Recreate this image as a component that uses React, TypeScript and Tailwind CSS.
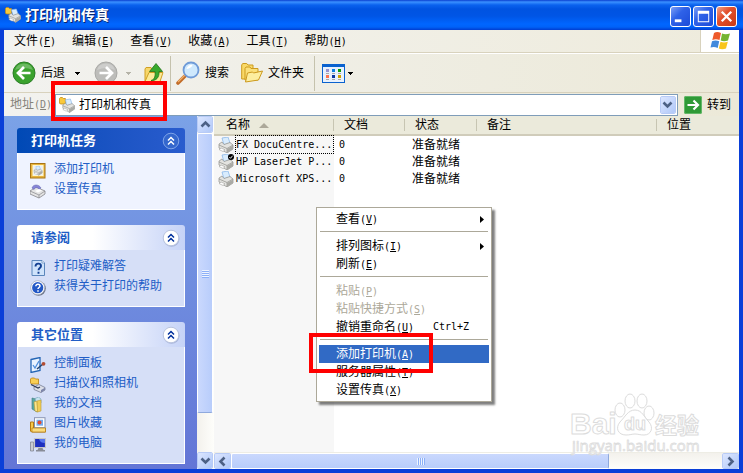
import { useState } from "react";
import type { ReactNode } from "react";
import { clsx } from "clsx";

type IconProps = { className?: string };

type TaskLink = {
  label: string;
  icon: (props: IconProps) => ReactNode;
};

type Printer = {
  name: string;
  documents: number;
  status: string;
  isDefault?: boolean;
};

type MenuEntry =
  | { kind: "separator" }
  | {
      kind: "item";
      label: string;
      hotkey: string;
      shortcut?: string;
      submenu?: boolean;
      disabled?: boolean;
      active?: boolean;
    };

const MENU_BAR = [
  { label: "文件", hotkey: "F" },
  { label: "编辑", hotkey: "E" },
  { label: "查看", hotkey: "V" },
  { label: "收藏", hotkey: "A" },
  { label: "工具", hotkey: "T" },
  { label: "帮助", hotkey: "H" },
];

const PRINTERS: Printer[] = [
  { name: "FX DocuCentre...", documents: 0, status: "准备就绪" },
  { name: "HP LaserJet P...", documents: 0, status: "准备就绪", isDefault: true },
  { name: "Microsoft XPS...", documents: 0, status: "准备就绪" },
];

const PRINTER_TASKS: TaskLink[] = [
  { label: "添加打印机", icon: AddPrinterIcon },
  { label: "设置传真", icon: FaxIcon },
];

const SEE_ALSO: TaskLink[] = [
  { label: "打印疑难解答", icon: TroubleshootIcon },
  { label: "获得关于打印的帮助", icon: HelpIcon },
];

const OTHER_PLACES: TaskLink[] = [
  { label: "控制面板", icon: ControlPanelIcon },
  { label: "扫描仪和照相机", icon: ScannerIcon },
  { label: "我的文档", icon: DocumentsIcon },
  { label: "图片收藏", icon: PicturesIcon },
  { label: "我的电脑", icon: ComputerIcon },
];

const CONTEXT_MENU: MenuEntry[] = [
  { kind: "item", label: "查看", hotkey: "V", submenu: true },
  { kind: "separator" },
  { kind: "item", label: "排列图标", hotkey: "I", submenu: true },
  { kind: "item", label: "刷新", hotkey: "E" },
  { kind: "separator" },
  { kind: "item", label: "粘贴", hotkey: "P", disabled: true },
  { kind: "item", label: "粘贴快捷方式", hotkey: "S", disabled: true },
  { kind: "item", label: "撤销重命名", hotkey: "U", shortcut: "Ctrl+Z" },
  { kind: "separator" },
  { kind: "item", label: "添加打印机", hotkey: "A", active: true },
  { kind: "item", label: "服务器属性", hotkey: "T" },
  { kind: "item", label: "设置传真", hotkey: "X" },
];

export default function App() {
  return (
    <div className="relative flex min-h-screen flex-col bg-[#0a3fd8] font-['Liberation_Sans','Noto_Sans_CJK_SC',sans-serif] text-xs leading-4 text-black">
      <TitleBar />
      <div className="mr-1 mb-1 ml-1 flex flex-1 flex-col">
        <MenuBar />
        <Toolbar />
        <AddressBar />
        <div className="flex flex-1">
          <Sidebar />
          <VerticalScrollbar />
          <main className="flex min-w-0 flex-1 flex-col bg-white">
            <PrinterList />
            <HorizontalScrollbar />
          </main>
        </div>
      </div>
      <ContextMenu />
      <Watermark />
    </div>
  );
}

function TitleBar() {
  return (
    <header className="flex h-[30px] items-center bg-[linear-gradient(to_bottom,#0a3fd0_0px,#3a90ff_2px,#0a62ee_5px,#0053e1_9px,#0055e5_16px,#0066ff_24px,#0062f8_27px,#003dd0_30px)] pr-[6px] pl-[5px]">
      <PrintersFoldersIcon className="h-4 w-4" />
      <h1 className="ml-1 flex-1 text-sm font-bold text-white [text-shadow:1px_1px_#0a246a]">
        打印机和传真
      </h1>
      <div className="flex gap-[2px] pt-[3px]">
        <CaptionButton label="最小化" className="bg-[linear-gradient(135deg,#7d9ff5,#2f62e8_40%,#1c4bd8)]">
          <path d="M4 13h7v3H4z" fill="#fff" />
        </CaptionButton>
        <CaptionButton label="最大化" className="bg-[linear-gradient(135deg,#7d9ff5,#2f62e8_40%,#1c4bd8)]">
          <path d="M4 4h12v12H4zM5 7v8h10V7z" fill="#fff" fillRule="evenodd" />
        </CaptionButton>
        <CaptionButton label="关闭" className="bg-[linear-gradient(135deg,#f0a088,#e2502c_40%,#c83a14)]">
          <path d="M5 5l10 10M15 5L5 15" stroke="#fff" strokeWidth="2.4" />
        </CaptionButton>
      </div>
    </header>
  );
}

function CaptionButton({ label, className, children }: { label: string; className: string; children: ReactNode }) {
  return (
    <button
      type="button"
      aria-label={label}
      className={clsx("h-[21px] w-[21px] rounded-[3px] border border-white", className)}
    >
      <svg viewBox="0 0 20 20" className="h-full w-full">
        {children}
      </svg>
    </button>
  );
}

function Latin({ children }: { children: ReactNode }) {
  return <span className="font-['DejaVu_Sans_Mono',monospace] text-[10px]">{children}</span>;
}

function Hotkey({ letter }: { letter: string }) {
  return (
    <Latin>
      (<u>{letter}</u>)
    </Latin>
  );
}

function MenuBar() {
  return (
    <nav className="flex h-[23px] items-stretch border-b border-[#d8d2bd] bg-linear-to-r from-[#f3f3f0] to-[#eeebdc]">
      <div className="flex flex-1 items-center gap-4 pl-[10px]">
        {MENU_BAR.map((item) => (
          <button key={item.hotkey} type="button" className="whitespace-nowrap">
            {item.label}
            <Hotkey letter={item.hotkey} />
          </button>
        ))}
      </div>
      <div className="flex w-[39px] items-center justify-center border-l border-[#d8d2bd] bg-white">
        <WindowsFlag className="h-5 w-5" />
      </div>
    </nav>
  );
}

function Toolbar() {
  return (
    <div className="flex h-10 items-center border-t border-b border-t-white border-b-[#d8d2bd] bg-linear-to-r from-[#f2f2ef] to-[#ece9d8] pl-2">
      <button type="button" className="flex items-center">
        <ArrowCircle className="h-6 w-6" />
        <span className="ml-[5px]">后退</span>
        <DropArrow className="ml-[10px] text-black" />
      </button>
      <button type="button" aria-label="前进" disabled className="ml-[14px] flex items-center">
        <ArrowCircle className="h-6 w-6" forward />
        <DropArrow className="ml-2 text-[#b5b3a8]" />
      </button>
      <button type="button" aria-label="向上" className="ml-3">
        <FolderUpIcon className="h-[22px] w-[22px]" />
      </button>
      <Divider className="ml-[5px]" />
      <button type="button" className="ml-[5px] flex items-center">
        <SearchIcon className="h-6 w-6" />
        <span className="ml-[5px]">搜索</span>
      </button>
      <button type="button" className="ml-3 flex items-center">
        <FoldersIcon className="h-[22px] w-[22px]" />
        <span className="ml-[5px]">文件夹</span>
      </button>
      <Divider className="ml-[10px]" />
      <button type="button" aria-label="查看" className="ml-[7px] flex items-center">
        <ViewsIcon className="h-[19px] w-[23px]" />
        <DropArrow className="ml-[3px] text-black" />
      </button>
    </div>
  );
}

function Divider({ className }: IconProps) {
  return <span className={clsx("h-[35px] w-px bg-[#c5c2ad]", className)} />;
}

function DropArrow({ className }: IconProps) {
  return (
    <svg viewBox="0 0 5 3" className={clsx("h-[3px] w-[5px]", className)} shapeRendering="crispEdges">
      <path d="M0 0h5L2.500 3z" fill="currentColor" />
    </svg>
  );
}

function AddressBar() {
  const [address, setAddress] = useState("打印机和传真");

  return (
    <form
      className="flex h-[23px] items-center bg-linear-to-r from-[#f2f2ef] to-[#ece9d8] pl-[6px]"
      onSubmit={(event) => event.preventDefault()}
    >
      <label htmlFor="address" className="w-[45px] text-[#85837a]">
        地址
        <Hotkey letter="D" />
      </label>
      <div className="relative flex h-[22px] flex-1 items-center border border-[#7f9db9] bg-white pl-[3px]">
        <PrintersFoldersIcon className="h-4 w-4" />
        <input
          id="address"
          value={address}
          onChange={(event) => setAddress(event.target.value)}
          className="ml-1 min-w-0 flex-1 bg-transparent outline-none"
        />
        <ScrollButton label="地址列表" direction="down" className="mr-px h-[18px] w-4" />
        <span className="pointer-events-none absolute -top-[14px] -left-[5px] z-10 h-[40px] w-[116px] border-4 border-[#ff0000]" />
      </div>
      <button type="submit" className="ml-[6px] flex items-center pr-2">
        <svg viewBox="0 0 18 18" className="h-[18px] w-[18px]">
          <rect width="18" height="18" rx="2" fill="#2f9a37" />
          <rect x=".5" y=".5" width="17" height="17" rx="1.5" fill="none" stroke="#63b868" />
          <path d="M3.500 9h10M9.500 4.500L14 9l-4.500 4.500" fill="none" stroke="#fff" strokeWidth="2.200" />
        </svg>
        <span className="ml-[5px]">转到</span>
      </button>
    </form>
  );
}

function Sidebar() {
  return (
    <aside className="flex w-[193px] shrink-0 flex-col gap-[15px] bg-linear-to-b from-[#7ba2e7] to-[#6375d6] pt-3 pr-3 pb-[5px] pl-[13px]">
      <TaskPanel title="打印机任务" links={PRINTER_TASKS} primary />
      <TaskPanel title="请参阅" links={SEE_ALSO} />
      <TaskPanel title="其它位置" links={OTHER_PLACES} />
    </aside>
  );
}

function TaskPanel({ title, links, primary }: { title: string; links: TaskLink[]; primary?: boolean }) {
  return (
    <section>
      <div
        className={clsx(
          "flex h-[25px] items-center justify-between rounded-t-[3px] pr-[5px] pl-[14px]",
          primary
            ? "bg-linear-to-r from-[#0049b5] to-[#295cce] text-white"
            : "bg-linear-to-r from-white from-45% to-[#c6d3f7] text-[#215dc6]"
        )}
      >
        <h2 className="text-[13px] font-bold">{title}</h2>
        <button type="button" aria-label={`折叠${title}`}>
          <svg viewBox="0 0 18 18" className="h-[18px] w-[18px]">
            {!primary && <circle cx="9.500" cy="9.800" r="8" fill="#8d9cc8" opacity=".6" />}
            <circle cx="9" cy="9" r="7.800" fill={primary ? "#3467cd" : "#fff"} stroke={primary ? "#7ea3e8" : "#b8c3de"} />
            <path
              d="M6 8.500l3-3 3 3M6 12.500l3-3 3 3"
              fill="none"
              stroke={primary ? "#fff" : "#00309c"}
              strokeWidth="1.500"
            />
          </svg>
        </button>
      </div>
      <ul
        className={clsx(
          "border-x border-b border-white pt-[6px] pb-[10px] pl-3",
          primary ? "bg-[#eff3ff]" : "bg-[#d6dff7]"
        )}
      >
        {links.map(({ label, icon: Icon }) => (
          <li key={label} className="h-5">
            <a href="#" className="flex items-center text-[#215dc6]">
              <Icon className="mt-1 h-4 w-4" />
              <span className="ml-2">{label}</span>
            </a>
          </li>
        ))}
      </ul>
    </section>
  );
}

const CHEVRONS = {
  up: "M3.500 9.500L7.500 5.500l4 4",
  down: "M3.500 5.500l4 4 4-4",
  left: "M9.500 3.500l-4 4 4 4",
  right: "M5.500 3.500l4 4-4 4",
};

function ScrollButton({
  label,
  direction,
  className,
}: {
  label: string;
  direction: keyof typeof CHEVRONS;
  className: string;
}) {
  return (
    <button
      type="button"
      aria-label={label}
      className={clsx(
        "flex shrink-0 items-center justify-center rounded-[2px] border border-white bg-linear-to-br from-[#dce6ff] to-[#b0c8f8] outline-1 -outline-offset-1 outline-[#b8cbf6]",
        className
      )}
    >
      <svg viewBox="0 0 15 15" className="h-[15px] w-[15px] shrink-0">
        <path d={CHEVRONS[direction]} fill="none" stroke="#4d6185" strokeWidth="2.600" />
      </svg>
    </button>
  );
}

function VerticalScrollbar() {
  return (
    <div className="flex w-[17px] shrink-0 flex-col bg-linear-to-r from-[#f3f1ec] to-[#fefefb] pr-px">
      <ScrollButton label="向上滚动" direction="up" className="h-[17px] w-4" />
      <div className="flex flex-1 flex-col pb-[39px]">
        <div className="flex flex-1 flex-col items-center justify-center gap-px rounded-[2px] border border-white border-b-[#8fa9dd] bg-linear-to-r from-[#cad8fd] to-[#b8cdfb]">
          {[0, 1, 2, 3].map((grip) => (
            <span key={grip} className="h-px w-[7px] bg-[#eef4fe] shadow-[0_1px_#8cb0f8]" />
          ))}
        </div>
      </div>
      <ScrollButton label="向下滚动" direction="down" className="h-[17px] w-4" />
    </div>
  );
}

function HorizontalScrollbar() {
  return (
    <div className="flex h-[17px] border-t border-[#eeede5] bg-linear-to-b from-[#f3f1ec] to-[#fefefb]">
      <ScrollButton label="向左滚动" direction="left" className="h-4 w-[17px]" />
      <div className="flex flex-1">
        <div className="flex w-[77%] items-center justify-center gap-px rounded-[2px] border border-white border-r-[#8fa9dd] bg-linear-to-b from-[#cad8fd] to-[#b8cdfb]">
          {[0, 1, 2, 3].map((grip) => (
            <span key={grip} className="h-[7px] w-px bg-[#eef4fe] shadow-[1px_0_#8cb0f8]" />
          ))}
        </div>
      </div>
      <ScrollButton label="向右滚动" direction="right" className="h-4 w-[17px]" />
    </div>
  );
}

function ColumnHeader({ label, sorted, last }: { label: string; sorted?: boolean; last?: boolean }) {
  return (
    <th className="h-[19px] border-b-2 border-[#d0ccba] bg-[#ebeadb] p-0 text-left font-normal">
      <div
        className={clsx(
          "flex h-3 items-center",
          sorted ? "pl-3" : "pl-[10px]",
          !last && "border-r border-[#c7c5b2] shadow-[1px_0_#fff]"
        )}
      >
        {label}
        {sorted && (
          <svg viewBox="0 0 10 5" className="ml-[9px] h-[5px] w-[10px]">
            <path d="M0 5l5-5 5 5z" fill="#aca899" />
          </svg>
        )}
      </div>
    </th>
  );
}

function PrinterList() {
  return (
    <div className="flex-1 bg-[linear-gradient(to_right,#f7f7f7_120px,#fff_120px)]">
      <table className="w-full table-fixed border-collapse">
        <colgroup>
          <col className="w-[120px]" />
          <col className="w-[71px]" />
          <col className="w-[72px]" />
          <col className="w-[180px]" />
          <col />
        </colgroup>
        <thead>
          <tr>
            <ColumnHeader label="名称" sorted />
            <ColumnHeader label="文档" />
            <ColumnHeader label="状态" />
            <ColumnHeader label="备注" />
            <ColumnHeader label="位置" last />
          </tr>
        </thead>
        <tbody>
          {PRINTERS.map((printer, i) => (
            <tr key={printer.name} className="h-[17px]">
              <td className="p-0">
                <div className="flex h-[17px] items-center pl-1">
                  <PrinterIcon className="h-4 w-4" isDefault={printer.isDefault} />
                  <span
                    className={clsx(
                      "ml-px flex-1 border whitespace-nowrap",
                      i === 0 ? "border-dotted border-black" : "border-transparent"
                    )}
                  >
                    <Latin>{printer.name}</Latin>
                  </span>
                </div>
              </td>
              <td className="p-0 pl-[5px]">
                <Latin>{printer.documents}</Latin>
              </td>
              <td className="p-0 pl-[7px]">{printer.status}</td>
              <td className="p-0" />
              <td className="p-0" />
            </tr>
          ))}
        </tbody>
      </table>
    </div>
  );
}

function ContextMenu() {
  return (
    <div
      role="menu"
      className="absolute top-[207px] left-[316px] z-20 w-44 border border-[#aca899] bg-white p-[2px] shadow-[3px_3px_2px_#00000080]"
    >
      {CONTEXT_MENU.map((entry, i) =>
        entry.kind === "separator" ? (
          <div key={i} role="separator" className="mx-px mt-[3px] mb-[5px] h-px bg-[#aca899]" />
        ) : (
          <div key={i} className="relative">
            <button
              type="button"
              role="menuitem"
              disabled={entry.disabled}
              className={clsx(
                "flex h-[18px] w-full items-center pr-[5px] pl-[17px] text-left",
                entry.disabled && "text-[#aca899]",
                entry.active && "bg-[#316ac5] text-white"
              )}
            >
              <span className="min-w-[97px]">
                {entry.label}
                <Hotkey letter={entry.hotkey} />
              </span>
              {entry.shortcut && <Latin>{entry.shortcut}</Latin>}
              {entry.submenu && (
                <svg viewBox="0 0 4 7" className="ml-auto h-[7px] w-1">
                  <path d="M0 0l4 3.500L0 7z" fill="currentColor" />
                </svg>
              )}
            </button>
            {entry.active && (
              <span className="pointer-events-none absolute -top-3 -left-[10px] z-10 h-[40px] w-[124px] border-4 border-[#ff0000]" />
            )}
          </div>
        )
      )}
    </div>
  );
}

function Watermark() {
  return (
    <svg
      viewBox="0 0 134 64"
      className="pointer-events-none absolute right-[39px] bottom-[17px] h-16 w-[134px]"
      fill="#fff"
      stroke="#dcdcdc"
      strokeLinejoin="round"
      fontFamily="Liberation Sans, Noto Sans CJK SC, sans-serif"
      fontWeight="bold"
    >
      <text x="0" y="42" fontSize="30">
        Bai
      </text>
      <ellipse cx="50" cy="18" rx="5" ry="7" />
      <ellipse cx="60" cy="9" rx="5" ry="7" />
      <ellipse cx="72" cy="9" rx="5" ry="7" />
      <ellipse cx="79" cy="21" rx="5" ry="7" />
      <path d="M65 18c7 0 9 7 14 12 5 6 2 13-5 13-4 0-6-1-9-1s-5 1-9 1c-8 0-11-7-6-13 5-5 8-12 15-12z" />
      <text x="54" y="38" fontSize="18">
        du
      </text>
      <text x="85" y="41" fontSize="22">
        经验
      </text>
      <text x="2" y="59" fontSize="15" strokeWidth=".8" fontFamily="Open Sans, sans-serif" fontWeight="normal">
        jingyan.baidu.com
      </text>
    </svg>
  );
}

function PrinterShape() {
  return (
    <>
      <path d="M4 1l6-1 2 6-6 2z" fill="#d9ecfd" stroke="#7fb0e6" strokeWidth=".7" />
      <path d="M1 7l3-2 2 2.500 6-2 3 2.500v4l-6 4L1 11z" fill="#e3e3e0" stroke="#8e8e8a" strokeWidth=".7" />
      <path d="M1 8l8 3.500 6-3.500M9 11.500V16" fill="none" stroke="#8e8e8a" strokeWidth=".7" />
      <path d="M9 12l6-3.500V12l-6 4z" fill="#a9a9a4" />
      <path d="M3 11l4 1.800-2 1.700-4-2z" fill="#fff" stroke="#8e8e8a" strokeWidth=".5" />
    </>
  );
}

function PrinterIcon({ className, isDefault }: IconProps & { isDefault?: boolean }) {
  return (
    <svg viewBox="0 0 16 16" className={className}>
      <PrinterShape />
      {isDefault && (
        <>
          <circle cx="13" cy="3" r="3" fill="#000" />
          <path d="M11.300 3l1.300 1.300 2-2.600" fill="none" stroke="#fff" strokeWidth=".9" />
        </>
      )}
    </svg>
  );
}

function PrintersFoldersIcon({ className }: IconProps) {
  return (
    <svg viewBox="0 0 16 16" className={className}>
      <path d="M.4 1.500L1.400.5h2l1 1h2V7h-5l-1-1z" fill="#f9c93c" stroke="#c08a17" strokeWidth=".8" />
      <g transform="translate(3 2) scale(.84)">
        <PrinterShape />
      </g>
    </svg>
  );
}

function AddPrinterIcon({ className }: IconProps) {
  return (
    <svg viewBox="0 0 16 16" className={className}>
      <rect x=".5" y=".5" width="14.500" height="14.500" fill="#e8b53e" stroke="#a87416" />
      <rect x="3" y="2.500" width="10" height="10" fill="#e8eef8" stroke="#fff6cf" />
      <g transform="translate(3.500 3) scale(.58)">
        <PrinterShape />
      </g>
    </svg>
  );
}

function FaxIcon({ className }: IconProps) {
  return (
    <svg viewBox="0 0 16 16" className={className}>
      <path d="M0 8l6-4 9 4v3l-6 4-9-4z" fill="#e4e4e4" stroke="#85858a" strokeWidth=".8" />
      <path d="M2 5c1-4 7-4 9 0l-2 1.500C8 4 5 4 4 6.500z" fill="#8584d8" stroke="#5e60a8" strokeWidth=".5" />
      <path d="M0 8l9 4 6-4M9 12v3" fill="none" stroke="#85858a" strokeWidth=".7" />
      <path d="M5 8l4-2 3 1.500-4 2z" fill="#fff" />
    </svg>
  );
}

function TroubleshootIcon({ className }: IconProps) {
  return (
    <svg viewBox="0 0 16 16" className={className}>
      <path d="M2 .5h10l2.500 2.500v12.500H2z" fill="#cfe3fb" stroke="#5b86bb" />
      <path d="M12 .5V3h2.500" fill="#fff" stroke="#5b86bb" strokeWidth=".7" />
      <path d="M5.500 6.500C5.500 2.500 11 3 11 6c0 2-2.500 2-2.500 4.200M8.500 11.800v2" fill="none" stroke="#123f91" strokeWidth="1.900" />
    </svg>
  );
}

function HelpIcon({ className }: IconProps) {
  return (
    <svg viewBox="0 0 16 16" className={className}>
      <circle cx="8.500" cy="8.500" r="7.300" fill="#6d7587" />
      <circle cx="7.700" cy="7.700" r="7" fill="#fff" stroke="#a0a9bd" strokeWidth=".7" />
      <circle cx="7.700" cy="7.700" r="5.600" fill="#2358c6" />
      <path d="M5.800 6.300c0-2.800 4.200-2.400 4.200-.3 0 1.500-2 1.500-2 3M8 10.200v1.600" fill="none" stroke="#fff" strokeWidth="1.500" />
    </svg>
  );
}

function ControlPanelIcon({ className }: IconProps) {
  return (
    <svg viewBox="0 0 16 16" className={className}>
      <path d="M1 2.500l9-2v13l-9 2z" fill="#e9f3ff" stroke="#2465b5" strokeWidth="1.300" />
      <path d="M3 8l2 3 4-7" fill="none" stroke="#4f8fdc" strokeWidth="1.300" />
      <path d="M7 12l6-5" stroke="#27466f" strokeWidth="1.600" />
      <circle cx="13.500" cy="6.800" r="1.900" fill="#b14c33" />
    </svg>
  );
}

function ScannerIcon({ className }: IconProps) {
  return (
    <svg viewBox="0 0 16 16" className={className}>
      <path d="M.5 2l1-1h3l1 1h3v5h-7l-1-1z" fill="#f9cf55" stroke="#ba8212" strokeWidth=".8" />
      <path d="M4 10l5-2.500 6 3v2.500l-4 2.500-7-3z" fill="#dcdfe8" stroke="#6a7086" strokeWidth=".7" />
      <path d="M1 7.500l7 3.500 2-1" fill="none" stroke="#333c53" strokeWidth="1.300" />
      <path d="M11 13l4-2.200V13l-4 2.500z" fill="#7d86aa" />
    </svg>
  );
}

function DocumentsIcon({ className }: IconProps) {
  return (
    <svg viewBox="0 0 16 16" className={className}>
      <path d="M2 1l4 1 1 13-5-3z" fill="#5aa7a1" stroke="#3d7a80" strokeWidth=".6" />
      <path d="M5 1.500L8.500 0 11 2v4H6z" fill="#c6e2ed" stroke="#6a9eb5" strokeWidth=".6" />
      <path d="M4 5l3-1 1 11-3-1z" fill="#fbe58c" stroke="#b99b32" strokeWidth=".6" />
      <path d="M7 4l4-1v11l-3.500 1z" fill="#f1cd56" stroke="#b99b32" strokeWidth=".6" />
    </svg>
  );
}

function PicturesIcon({ className }: IconProps) {
  return (
    <svg viewBox="0 0 16 16" className={className}>
      <path d="M.5 5h3v6h12v4H1.500l-1-1z" fill="#f7c94b" stroke="#b47b12" />
      <rect x="4.500" y=".7" width="10.500" height="10" fill="#fff" stroke="#8995b3" />
      <rect x="6.500" y="2.700" width="6.500" height="6" fill="#72aef0" />
      <circle cx="9.500" cy="5.500" r="2" fill="#e04a32" />
      <path d="M2 11h13.500v4H2z" fill="#fbdc7d" stroke="#b47b12" strokeWidth=".7" />
    </svg>
  );
}

function ComputerIcon({ className }: IconProps) {
  return (
    <svg viewBox="0 0 16 16" className={className}>
      <path d="M.5 5h3v9h-3z" fill="#c9cbd2" stroke="#777c89" strokeWidth=".7" />
      <path d="M4.500 1.500h11v9h-11z" fill="#1c2fc0" stroke="#c5c5c7" strokeWidth="1.200" />
      <path d="M9 2h6v4c-3 0-5-1-6-4z" fill="#5474ef" />
      <path d="M8.500 11h4l1 2h-6zM6 13h9v1.500H6z" fill="#888c97" />
    </svg>
  );
}

function WindowsFlag({ className }: IconProps) {
  return (
    <svg viewBox="0 0 20 20" className={className}>
      <path d="M4 2q3-2 7 0L9.500 9Q6 7.500 2.300 9z" fill="#ee5a2b" />
      <path d="M12 2.500q3.500 1.500 8 0L18 9.500q-4 1.500-7.300 0z" fill="#74b531" />
      <path d="M2 10.300q3.500-1.500 7.200 0L7.700 17Q4 15 .5 16.600z" fill="#4189dc" />
      <path d="M10.500 10.800q3.500 1.500 7.300 0l-1.800 6.700q-3.800 1.500-7.200 0z" fill="#f8c51c" />
    </svg>
  );
}

function ArrowCircle({ className, forward }: IconProps & { forward?: boolean }) {
  return (
    <svg viewBox="0 0 24 24" className={className}>
      <circle cx="12" cy="12" r="11" fill={forward ? "#bdbdba" : "#3aa22d"} stroke={forward ? "#a9a9a6" : "#2b7d27"} />
      <path d="M3 9a9.500 9.500 0 0 1 18 0Q12 5 3 9z" fill="#fff" opacity=".25" />
      <path
        d={forward ? "M5.500 12h12M12 6l6 6-6 6" : "M18.500 12h-12M12 6l-6 6 6 6"}
        fill="none"
        stroke="#fff"
        strokeWidth="2.700"
      />
    </svg>
  );
}

function FolderUpIcon({ className }: IconProps) {
  return (
    <svg viewBox="0 0 22 22" className={className}>
      <path d="M2 7l1-1.500h5L9 7h8v12H2z" fill="#f7d76a" stroke="#d0a024" />
      <path d="M2 19.500l4-9h14l-3 9z" fill="#fcea97" stroke="#d0a024" />
      <path d="M8 18.500c4-1 4.500-5 4-9H6.500L13 1.500l6.500 8H16c.5 6-3 9.500-8 9z" fill="#38a92c" stroke="#207219" strokeWidth=".8" />
    </svg>
  );
}

function SearchIcon({ className }: IconProps) {
  return (
    <svg viewBox="0 0 24 24" className={className}>
      <path d="M2 22l8-8" stroke="#c26c28" strokeWidth="3.600" strokeLinecap="round" />
      <path d="M2 21l7-7" stroke="#f1b06a" strokeWidth="1.300" />
      <circle cx="15" cy="9" r="7.500" fill="#cfe9fd" stroke="#6f9bd8" strokeWidth="1.800" />
      <path d="M10.500 8a5 5 0 0 1 6-4q-1 3-6 4z" fill="#fff" />
    </svg>
  );
}

function FoldersIcon({ className }: IconProps) {
  return (
    <svg viewBox="0 0 22 22" className={className}>
      <path d="M.7 3l1-1.500h4L7 3h5v14H.7z" fill="#f9d967" stroke="#cc9a1e" />
      <path d="M4 6.500L5 5h4l1 1.500h7V18H4z" fill="#fbe07a" stroke="#cc9a1e" />
      <path d="M4.500 20l2-9 5-1 1 1 9-2-4 9z" fill="#fdee9f" stroke="#cc9a1e" />
    </svg>
  );
}

function ViewsIcon({ className }: IconProps) {
  return (
    <svg viewBox="0 0 23 19" className={className} shapeRendering="crispEdges">
      <path d="M0 0h23v19H0z" fill="#0a62cf" />
      <path d="M1 3h21v15H1z" fill="#e8f1fd" />
      <path d="M4 5h3v3H4z" fill="#9a93cf" />
      <path d="M10 5h3v3h-3z" fill="#0a7fe0" />
      <path d="M16 5h3v3h-3z" fill="#0b9a0b" />
      <path d="M4 11h3v3H4z" fill="#ff7450" />
      <path d="M10 11h3v3h-3z" fill="#0b35a0" />
      <path d="M16 11h3v3h-3z" fill="#d0a000" />
      <path d="M4 9h3v1H4zM10 9h3v1h-3zM16 9h3v1h-3zM4 15h3v1H4zM10 15h3v1h-3zM16 15h3v1h-3z" fill="#a9a9a9" />
    </svg>
  );
}
